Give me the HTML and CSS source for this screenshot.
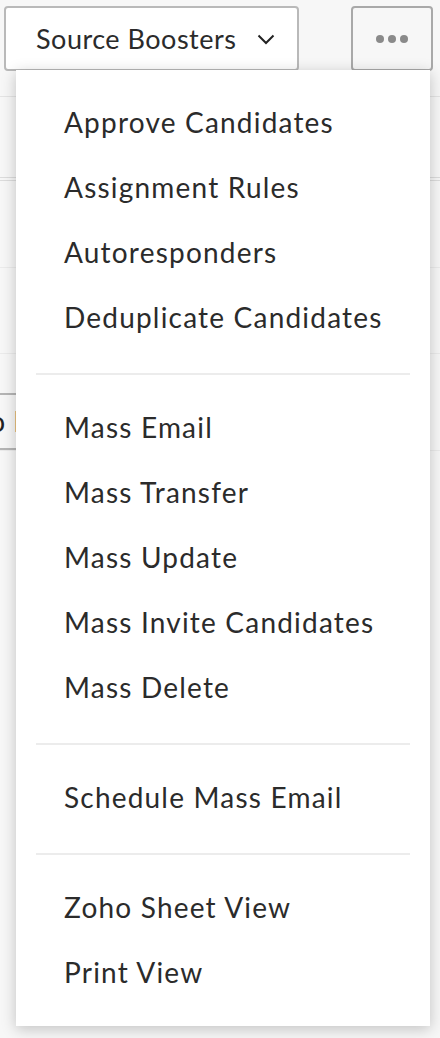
FILE: index.html
```html
<!DOCTYPE html>
<html>
<head>
<meta charset="utf-8">
<link rel="stylesheet" href="styles.css">
</head>
<body>
<div class="page">
  <div class="toolbar">
    <button class="btn btn-source">
      <span>Source Boosters</span>
      <svg class="chev" width="18" height="11" viewBox="0 0 18 11"><path d="M1.5 1.5 L9 9 L16.5 1.5" fill="none" stroke="#222" stroke-width="2"/></svg>
    </button>
    <button class="btn btn-more">
      <span class="dot"></span><span class="dot"></span><span class="dot"></span>
    </button>
  </div>
  <div class="row row-a"></div>
  <div class="row row-b"></div>
  <div class="row row-c"></div>
  <div class="row row-d"></div>
  <div class="row row-e">
    <span class="ghost-btn">Go F</span>
  </div>

  <div class="menu">
    <div class="group">
      <div class="item">Approve Candidates</div>
      <div class="item">Assignment Rules</div>
      <div class="item">Autoresponders</div>
      <div class="item">Deduplicate Candidates</div>
    </div>
    <div class="divider"></div>
    <div class="group">
      <div class="item">Mass Email</div>
      <div class="item">Mass Transfer</div>
      <div class="item">Mass Update</div>
      <div class="item">Mass Invite Candidates</div>
      <div class="item">Mass Delete</div>
    </div>
    <div class="divider"></div>
    <div class="group">
      <div class="item">Schedule Mass Email</div>
    </div>
    <div class="divider"></div>
    <div class="group group-last">
      <div class="item">Zoho Sheet View</div>
      <div class="item">Print View</div>
    </div>
  </div>
</div>
</body>
</html>
```

FILE: styles.css
```css
* { box-sizing: border-box; }
html, body { margin: 0; padding: 0; }
body {
  background: #f7f7f7;
  font-family: Lato, "Noto Sans", sans-serif;
  color: #2b2b2b;
}
.page {
  position: relative;
  width: 440px;
  height: 1038px;
  overflow: hidden;
}
.toolbar {
  display: flex;
  align-items: flex-start;
  gap: 52px;
  padding: 6px 0 0 4px;
  height: 97px;
  border-bottom: 1px solid #e4e4e4;
}
.btn {
  font-family: inherit;
  height: 65px;
  border: 2px solid #b9b9b9;
  border-radius: 4px;
  display: flex;
  align-items: center;
  padding: 0;
  margin: 0;
}
.btn-source {
  width: 295px;
  background: #fff;
  font-size: 27px;
  letter-spacing: 0.5px;
  color: #2b2b2b;
  gap: 21px;
  justify-content: flex-start;
  padding-left: 30px;
}
.chev { margin-top: 2px; }
.btn-more {
  width: 82px;
  background: #f7f7f7;
  border-color: #a9a9a9;
  gap: 4px;
  justify-content: center;
}
.dot {
  width: 8px;
  height: 8px;
  border-radius: 50%;
  background: #8a8a8a;
}
.row { border-bottom: 1px solid #ebebeb; }
.row-a { height: 81px; border-bottom-color: #dcdcdc; }
.row-b { height: 3px; border-bottom-color: #dcdcdc; }
.row-c { height: 87px; }
.row-d { height: 86px; }
.row-e { padding-top: 39px; display: flex; }
.ghost-btn {
  display: block;
  margin-left: -32px;
  height: 57px;
  width: 200px;
  border-top: 2px solid #b5b5b5;
  border-bottom: 2px solid #b5b5b5;
  font-size: 28px;
  letter-spacing: 1px;
  word-spacing: -1px;
  line-height: 53px;
  color: #222;
}

.menu {
  position: absolute;
  left: 16px;
  top: 70px;
  width: 414px;
  background: #fff;
  box-shadow: 0 3px 14px rgba(0, 0, 0, 0.22);
}
.group { padding: 20px 0 23px; }
.group-last { padding-bottom: 21px; }
.item {
  height: 65px;
  line-height: 65px;
  padding-left: 48px;
  font-size: 28px;
  letter-spacing: 1.2px;
  color: #2b2b2b;
  white-space: nowrap;
}
.divider {
  height: 2px;
  margin: 0 20px;
  background: #ececec;
}
```
